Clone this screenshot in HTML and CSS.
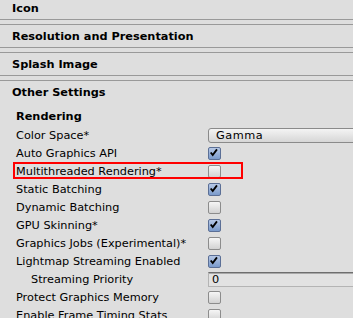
FILE: index.html
```html
<!DOCTYPE html>
<html>
<head>
<meta charset="utf-8">
<link rel="stylesheet" href="styles.css">
</head>
<body>
<div class="inspector">
  <div class="foldout first">Icon</div>
  <div class="foldout">Resolution and Presentation</div>
  <div class="foldout">Splash Image</div>
  <div class="foldout open">Other Settings</div>
  <div class="settings">
    <div class="subhead">Rendering</div>
    <div class="row"><span class="label">Color Space*</span><div class="popup">Gamma</div></div>
    <div class="row"><span class="label">Auto Graphics API</span><span class="check on"><svg viewBox="0 0 13 13"><path d="M3 6.3 L5.4 9.3 L10.4 2.6"/></svg></span></div>
    <div class="row highlight"><span class="label">Multithreaded Rendering*</span><span class="check"></span></div>
    <div class="row"><span class="label">Static Batching</span><span class="check on"><svg viewBox="0 0 13 13"><path d="M3 6.3 L5.4 9.3 L10.4 2.6"/></svg></span></div>
    <div class="row"><span class="label">Dynamic Batching</span><span class="check"></span></div>
    <div class="row"><span class="label">GPU Skinning*</span><span class="check on"><svg viewBox="0 0 13 13"><path d="M3 6.3 L5.4 9.3 L10.4 2.6"/></svg></span></div>
    <div class="row"><span class="label">Graphics Jobs (Experimental)*</span><span class="check"></span></div>
    <div class="row"><span class="label">Lightmap Streaming Enabled</span><span class="check on"><svg viewBox="0 0 13 13"><path d="M3 6.3 L5.4 9.3 L10.4 2.6"/></svg></span></div>
    <div class="row"><span class="label indent">Streaming Priority</span><div class="field">0</div></div>
    <div class="row"><span class="label">Protect Graphics Memory</span><span class="check"></span></div>
    <div class="row"><span class="label">Enable Frame Timing Stats</span><span class="check"></span></div>
  </div>
</div>
</body>
</html>
```
FILE: styles.css
```css
html, body {
  margin: 0;
  padding: 0;
  background: #dedede;
  overflow: hidden;
}
.inspector {
  width: 380px;
  font-family: "DejaVu Sans", Verdana, sans-serif;
  font-size: 11.3px;
  color: #000;
}
.foldout {
  height: 21px;
  padding-top: 1px;
  line-height: 22px;
  border-top: 1px solid #999;
  border-bottom: 1px solid #999;
  margin-bottom: 4px;
  padding-left: 12px;
  font-weight: bold;
}
.foldout.first {
  margin-top: -4px;
}
.foldout.open {
  border-bottom: none;
  margin-bottom: 3px;
}
.settings {
  display: flex;
  flex-direction: column;
}
.subhead {
  height: 16px;
  padding-top: 2px;
  line-height: 18px;
  padding-left: 16px;
  font-weight: bold;
  margin-bottom: 2px;
}
.row {
  height: 18px;
  display: grid;
  grid-template-columns: 192px 1fr;
  align-items: center;
  padding-left: 16px;
  position: relative;
}
.label {
  align-self: stretch;
  padding-top: 2px;
  line-height: 16px;
  white-space: nowrap;
}
.label.indent {
  padding-left: 15px;
}
.highlight::after {
  content: "";
  position: absolute;
  left: 13px;
  top: 0;
  width: 226px;
  height: 13px;
  border: 2px solid #f00;
}
.check {
  width: 11px;
  height: 11px;
  border: 1px solid #8c8c8c;
  border-radius: 2px;
  background: linear-gradient(#f6f6f6, #d2d2d2);
  box-sizing: content-box;
  display: block;
}
.check.on {
  border-color: #5b6f96;
  background: linear-gradient(#b6c8e6, #7a9acb);
}
.check svg {
  display: block;
  width: 11px;
  height: 11px;
  overflow: visible;
}
.check svg path {
  fill: none;
  stroke: #000;
  stroke-width: 2.2;
  stroke-linecap: butt;
  stroke-linejoin: miter;
  transform: translate(-1px, -1px);
}
.popup {
  height: 13px;
  line-height: 14px;
  border: 1px solid #8a8a8a;
  border-radius: 3px 0 0 3px;
  background: linear-gradient(#f4f4f4, #d6d6d6);
  padding-left: 7px;
  letter-spacing: 0.5px;
}
.field {
  height: 13px;
  line-height: 14px;
  margin-top: 1px;
  border: 1px solid #b4b4b4;
  border-top-color: #6e6e6e;
  box-shadow: inset 0 1px 0 #a8a8a8;
  background: #e2e2e2;
  padding-left: 3px;
}
```
